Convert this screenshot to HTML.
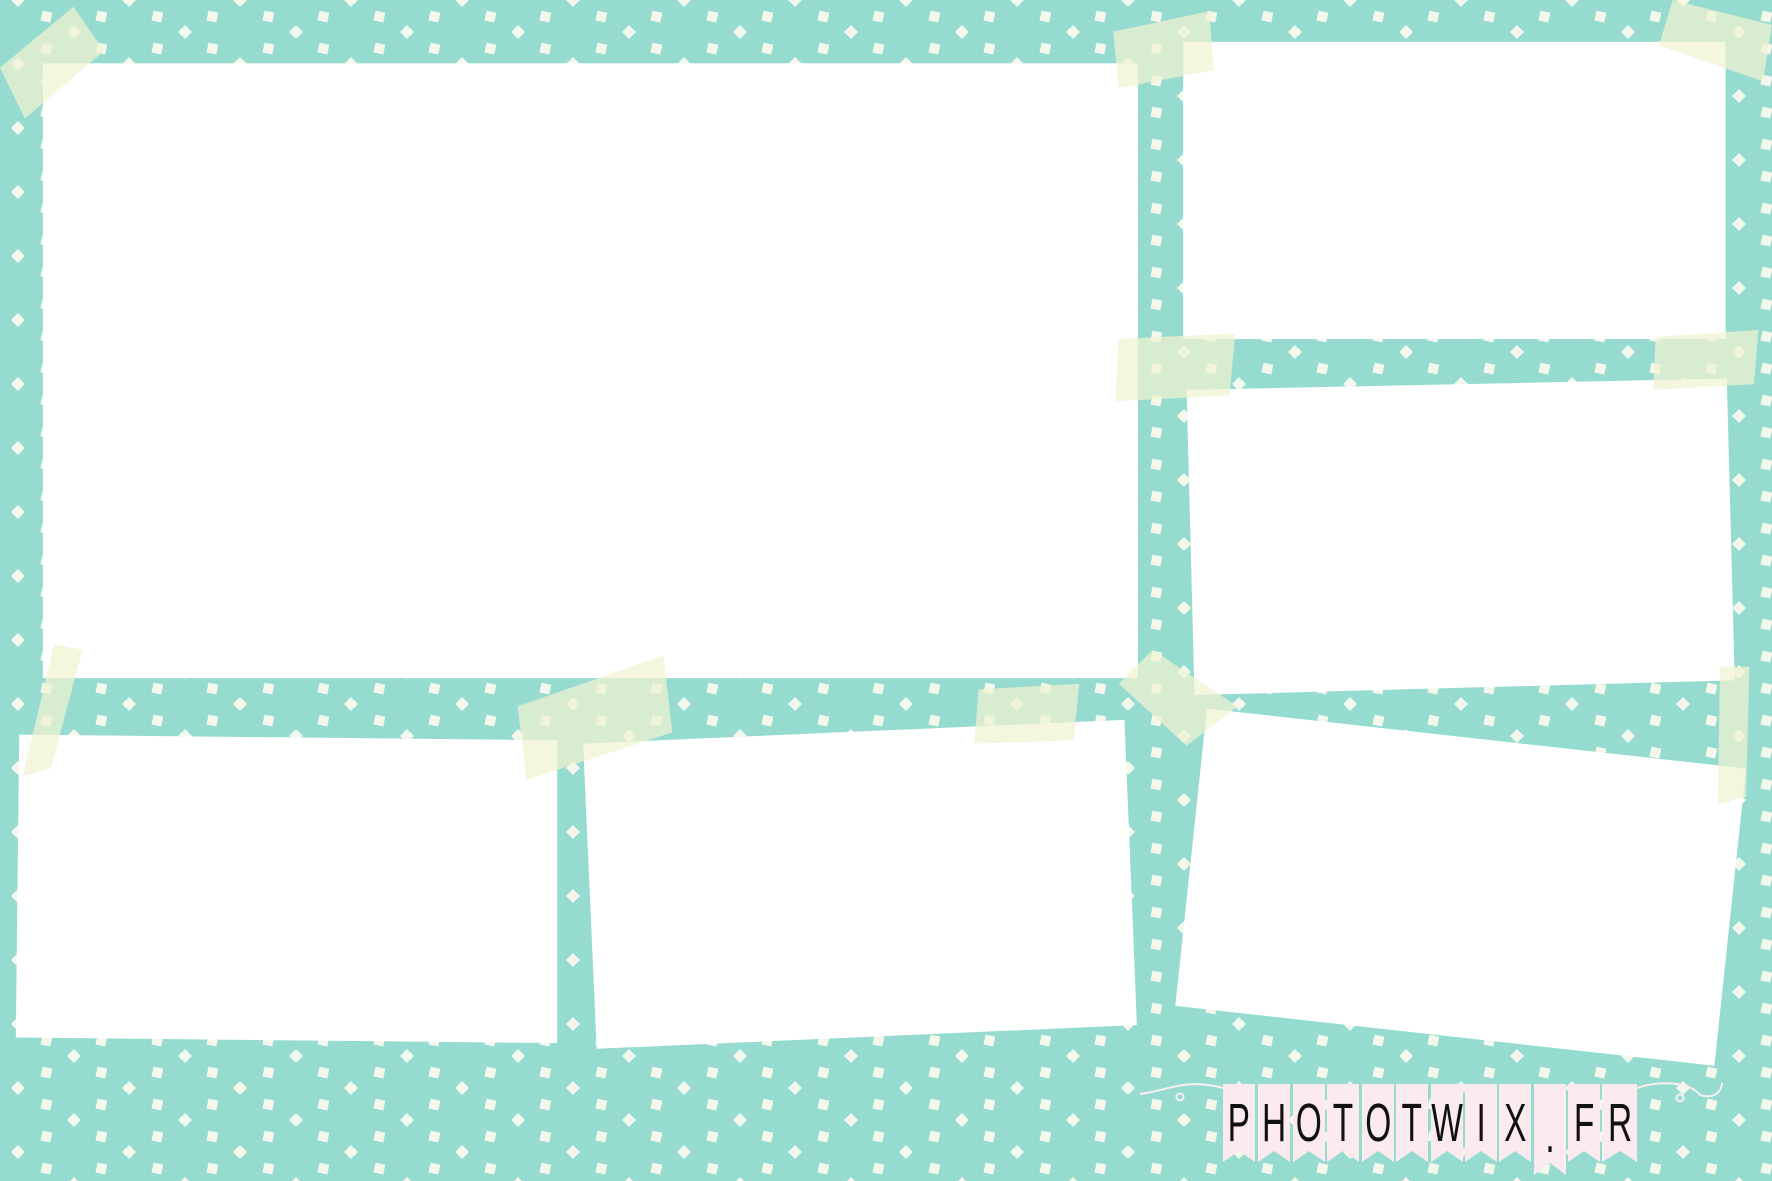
<!DOCTYPE html>
<html><head><meta charset="utf-8"><style>
html,body{margin:0;padding:0;width:1772px;height:1181px;overflow:hidden;background:#96dbd0}
svg{position:absolute;left:0;top:0}
</style></head><body>
<svg width="1772" height="1181" viewBox="0 0 1772 1181">
<defs>
<pattern id="dots" width="111" height="64" patternUnits="userSpaceOnUse">
<g fill="#f4f8ea">
<rect x="41.5" y="43.5" width="10" height="10" transform="rotate(12 46 48)"/>
<rect x="96.5" y="43.5" width="10" height="10" transform="rotate(12 101 48)"/>
<rect x="41.5" y="11.5" width="10" height="10" transform="rotate(12 46 16)"/>
<rect x="96.5" y="11.5" width="10" height="10" transform="rotate(12 101 16)"/>
<polygon points="18,-7 25,0 18,7 11,0"/>
<polygon points="18,57 25,64 18,71 11,64"/>
<polygon points="74,25 81,32 74,39 67,32"/>
</g>
</pattern>
</defs>
<rect width="1772" height="1181" fill="url(#dots)"/>
</svg>
<svg width="1772" height="1181" viewBox="0 0 1568 1045" preserveAspectRatio="none">
<g fill="#fff">
<rect x="38" y="56" width="969" height="544"/>
<rect x="1047" y="37" width="480" height="263"/>
<polygon points="1050,345 1528,335 1535,602 1057,615"/>
<polygon points="17,650 493,655 493,923 14,918"/>
<polygon points="516,658 995,637 1006,907 528,928"/>
<polygon points="1068,627 1545,680 1517,943 1040,890"/>
</g>
<g fill="rgba(240,242,208,0.72)">
<polygon points="0,60 65,6 92,45 22,105"/>
<polygon points="985,28 1070,10 1074,62 990,78"/>
<polygon points="1480,0 1568,22 1560,72 1468,40"/>
<polygon points="990,300 1093,295 1088,350 987,355"/>
<polygon points="1465,298 1556,292 1552,340 1463,345"/>
<polygon points="48,570 73,575 45,680 20,687"/>
<polygon points="458,625 587,580 595,648 466,690"/>
<polygon points="866,610 955,605 950,655 862,658"/>
<polygon points="990,605 1020,575 1095,625 1050,660"/>
<polygon points="1522,590 1548,590 1545,705 1520,712"/>
</g>
</svg>
<svg width="1772" height="1181" viewBox="0 0 1772 1181">
<g fill="none" stroke="#fbeef0" stroke-width="2">
<path d="M1140,1094 C1170,1090 1185,1078 1223,1088"/>
<circle cx="1180" cy="1097" r="3.5"/>
<path d="M1637,1088 C1660,1080 1690,1082 1700,1095 C1715,1100 1722,1090 1722,1083"/>
<circle cx="1680" cy="1098" r="3.5"/>
</g>
<g fill="#fbeaee">
<polygon points="1223,1084 1255,1084 1255,1162 1239,1151 1223,1162"/>
<polygon points="1258,1084 1290,1084 1290,1162 1274,1151 1258,1162"/>
<polygon points="1293,1084 1325,1084 1325,1162 1309,1151 1293,1162"/>
<polygon points="1327,1084 1359,1084 1359,1162 1343,1151 1327,1162"/>
<polygon points="1362,1084 1394,1084 1394,1162 1378,1151 1362,1162"/>
<polygon points="1396,1084 1428,1084 1428,1162 1412,1151 1396,1162"/>
<polygon points="1431,1084 1463,1084 1463,1162 1447,1151 1431,1162"/>
<polygon points="1465,1084 1497,1084 1497,1162 1481,1151 1465,1162"/>
<polygon points="1499,1084 1531,1084 1531,1162 1515,1151 1499,1162"/>
<polygon points="1534,1084 1566,1084 1566,1175 1550,1163 1534,1175"/>
<polygon points="1568,1084 1600,1084 1600,1162 1584,1151 1568,1162"/>
<polygon points="1602,1084 1637,1084 1637,1162 1620,1151 1602,1162"/>
</g>
<g font-family="Liberation Sans, sans-serif" font-size="54" fill="#111" text-anchor="middle">
<g transform="scale(0.62,1)">
<text x="1998" y="1141">P</text><text x="2055" y="1141">H</text><text x="2111" y="1141">O</text>
<text x="2166" y="1141">T</text><text x="2223" y="1141">O</text><text x="2277" y="1141">T</text>
<text x="2334" y="1141">W</text><text x="2389" y="1141">I</text><text x="2444" y="1141">X</text>
<text x="2500" y="1152">.</text><text x="2555" y="1141">F</text><text x="2613" y="1141">R</text>
</g>
</g>
</svg>
</body></html>
